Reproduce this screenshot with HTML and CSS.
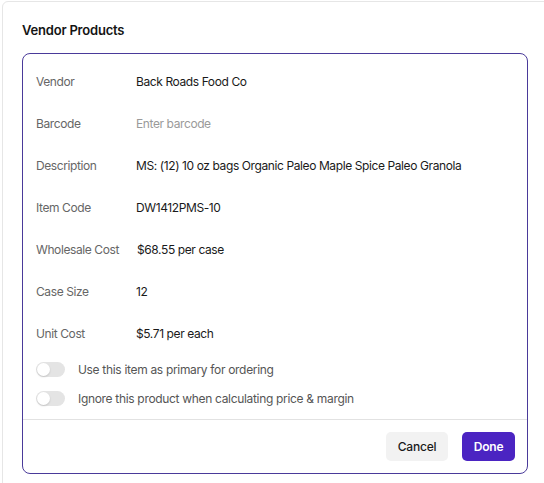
FILE: index.html
```html
<!DOCTYPE html>
<html lang="en">
<head>
<meta charset="utf-8">
<title>Vendor Products</title>
<link rel="stylesheet" href="styles.css">
</head>
<body>
  <section class="panel">
    <h2 class="panel-title">Vendor Products</h2>
    <div class="vendor-card">
      <dl class="fields">
        <div class="field"><dt>Vendor</dt><dd>Back Roads Food Co</dd></div>
        <div class="field"><dt>Barcode</dt><dd class="placeholder">Enter barcode</dd></div>
        <div class="field"><dt>Description</dt><dd>MS: (12) 10 oz bags Organic Paleo Maple Spice Paleo Granola</dd></div>
        <div class="field"><dt>Item Code</dt><dd>DW1412PMS-10</dd></div>
        <div class="field"><dt>Wholesale Cost</dt><dd class="nudge">$68.55 per case</dd></div>
        <div class="field"><dt>Case Size</dt><dd>12</dd></div>
        <div class="field"><dt>Unit Cost</dt><dd>$5.71 per each</dd></div>
      </dl>
      <div class="options">
        <label class="option"><span class="switch"><span class="knob"></span></span>Use this item as primary for ordering</label>
        <label class="option"><span class="switch"><span class="knob"></span></span>Ignore this product when calculating price &amp; margin</label>
      </div>
      <div class="actions">
        <button class="btn btn-cancel" type="button">Cancel</button>
        <button class="btn btn-done" type="button">Done</button>
      </div>
    </div>
  </section>
</body>
</html>
```
FILE: styles.css
```css
* { box-sizing: border-box; }

html, body {
  margin: 0;
  background: #ffffff;
  font-family: Inter, "Noto Sans", sans-serif;
  color: #1a1a1a;
  overflow: hidden;
}

.panel {
  margin: 1px 0 0 2px;
  width: 580px;
  height: 520px;
  border: 1px solid #e6e6e6;
  border-radius: 6px;
  padding: 18px 0 0 19px;
}

.panel-title {
  margin: 0;
  font-size: 13px;
  line-height: 20px;
  font-weight: 600;
  letter-spacing: -0.2px;
  color: #141414;
}

.vendor-card {
  margin-top: 13px;
  width: 506px;
  border: 1px solid #4a3a9a;
  border-radius: 8px;
}

.fields {
  margin: 0;
  padding: 6px 13px 0;
}

.field {
  display: flex;
  align-items: center;
  height: 42px;
  font-size: 12px;
  letter-spacing: -0.4px;
}

.field dt {
  width: 100px;
  flex: none;
  color: #666666;
}

.field dd {
  margin: 0;
  color: #1a1a1a;
}

.field .placeholder { color: #9a9a9a; }
.field .nudge { padding-left: 1px; }

.options {
  padding: 1px 13px 6px;
}

.option {
  display: flex;
  align-items: center;
  gap: 13px;
  height: 29px;
  font-size: 12px;
  letter-spacing: -0.32px;
  color: #555555;
}

.switch {
  width: 29px;
  height: 15px;
  border-radius: 8px;
  background: #e4e4e4;
  position: relative;
  flex: none;
}

.knob {
  position: absolute;
  left: 1px;
  top: 1px;
  width: 13px;
  height: 13px;
  border-radius: 50%;
  background: #ffffff;
  box-shadow: 0 1px 2px rgba(0, 0, 0, 0.15);
}

.actions {
  border-top: 1px solid #e2e2e2;
  display: flex;
  justify-content: flex-end;
  gap: 14px;
  padding: 12px 12px 12px;
}

.btn {
  height: 29px;
  border: none;
  border-radius: 5px;
  font-family: inherit;
  font-size: 12px;
  font-weight: 500;
  letter-spacing: -0.2px;
  padding: 0;
}

.btn-cancel {
  width: 62px;
  background: #f2f2f2;
  color: #1a1a1a;
}

.btn-done {
  width: 53px;
  background: #4b24c2;
  color: #ffffff;
  font-weight: 600;
}
```
